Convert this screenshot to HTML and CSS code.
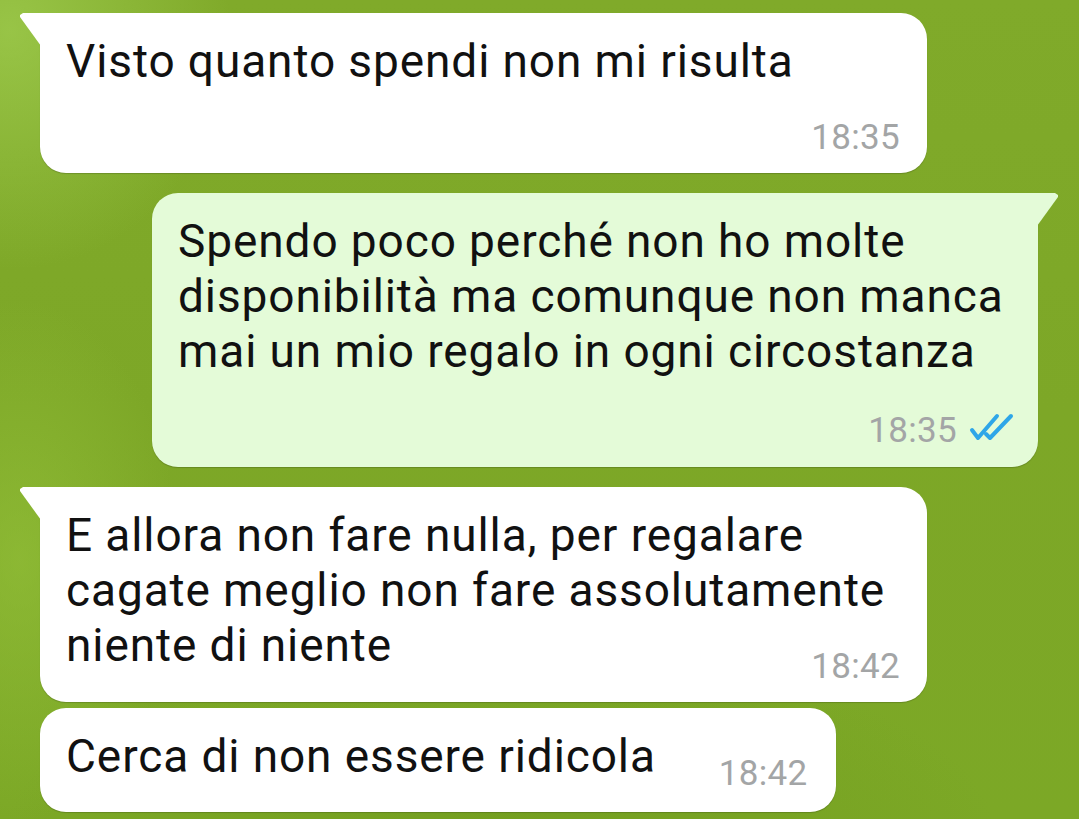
FILE: index.html
```html
<!DOCTYPE html>
<html lang="it">
<head>
<meta charset="utf-8">
<title>Chat</title>
<link rel="stylesheet" href="styles.css">
</head>
<body>
<main class="chat">
  <div class="bubble in tail w-full">
    <p class="text">Visto quanto spendi non mi risulta</p>
    <div class="meta"><span class="time">18:35</span></div>
  </div>

  <div class="bubble out tail w-full">
    <p class="text">Spendo poco perché non ho molte<br>disponibilità ma comunque non manca<br>mai un mio regalo in ogni circostanza</p>
    <div class="meta meta-out">
      <span class="time">18:35</span>
      <svg class="ticks" width="46" height="28" viewBox="0 0 46 28" aria-hidden="true">
        <path d="M3 17 L9 25 L28 3" fill="none" stroke="#2ea6e8" stroke-width="4" stroke-linecap="round" stroke-linejoin="round"/>
        <path d="M17 21 L21 25 L42 3" fill="none" stroke="#2ea6e8" stroke-width="4" stroke-linecap="round" stroke-linejoin="round"/>
      </svg>
    </div>
  </div>

  <div class="bubble in tail w-full">
    <p class="text">E allora non fare nulla, per regalare<br>cagate meglio non fare assolutamente<br>niente di niente</p>
    <div class="meta meta-overlap"><span class="time">18:42</span></div>
  </div>

  <div class="bubble in cont row">
    <p class="text text-row">Cerca di non essere ridicola</p>
    <div class="meta"><span class="time">18:42</span></div>
  </div>
</main>
</body>
</html>
```

FILE: styles.css
```css
* { box-sizing: border-box; }

html, body {
  margin: 0;
  padding: 0;
  width: 1079px;
  height: 819px;
  overflow: hidden;
}

body {
  font-family: Roboto, "Liberation Sans", Arial, sans-serif;
  color: #111;
  background:
    radial-gradient(ellipse 220px 240px at 10px 30px, rgba(160, 205, 80, 0.75), rgba(160, 205, 80, 0) 100%),
    radial-gradient(ellipse 160px 260px at 20px 560px, rgba(150, 195, 60, 0.6), rgba(150, 195, 60, 0) 100%),
    radial-gradient(ellipse 500px 200px at 500px 840px, rgba(100, 140, 20, 0.35), rgba(100, 140, 20, 0) 100%),
    linear-gradient(180deg, #80aa2a 0%, #7da727 50%, #7ca826 100%);
}

.chat {
  display: flex;
  flex-direction: column;
  align-items: flex-start;
  padding: 13px 41px 0 40px;
}

.bubble {
  position: relative;
  background: #ffffff;
  border-radius: 26px;
  padding: 21px 27px 15px 26px;
  box-shadow: 0 1px 1px rgba(0, 0, 0, 0.18);
}

.bubble.in.tail { border-top-left-radius: 0; }
.bubble.out.tail { border-top-right-radius: 0; }

.bubble.in.tail::before {
  content: "";
  position: absolute;
  left: -20px;
  top: 0;
  width: 21px;
  height: 33px;
  background: #ffffff;
  clip-path: polygon(3px 0, 21px 0, 21px 33px, 0 4px, 0 2px);
}

.bubble.out {
  align-self: flex-end;
  background: #e4fbd8;
  margin-top: 20px;
  padding-right: 23px;
  padding-bottom: 16px;
}

.bubble.out.tail::before {
  content: "";
  position: absolute;
  right: -20px;
  top: 0;
  width: 21px;
  height: 33px;
  background: #e4fbd8;
  clip-path: polygon(0 0, 18px 0, 21px 2px, 21px 4px, 0 33px);
}

.bubble.in.tail + .bubble, .bubble.out + .bubble { margin-top: 20px; }
.bubble.cont { margin-top: 6px !important; }

.w-full { width: 887px; }
.bubble.out.w-full { width: 886px; }

.text {
  margin: 0;
  font-size: 46px;
  letter-spacing: 0.9px;
  line-height: 55px;
  font-weight: 400;
  white-space: nowrap;
}

.meta {
  display: flex;
  justify-content: flex-end;
  align-items: center;
  margin-top: 29px;
  height: 40px;
}

.meta-out { margin-top: 32px; }
.meta-overlap { margin-top: -26px; }

.time {
  font-size: 35px;
  line-height: 40px;
  color: #a3a5a6;
  letter-spacing: 0.3px;
}

.ticks {
  margin-left: 12px;
  margin-top: -8px;
}

.bubble.row {
  display: flex;
  align-items: flex-end;
  padding: 21px 28px 18px 26px;
}

.text-row { margin-bottom: 10px; }

.bubble.row .meta {
  margin-top: 0;
  margin-left: 63px;
}
```
